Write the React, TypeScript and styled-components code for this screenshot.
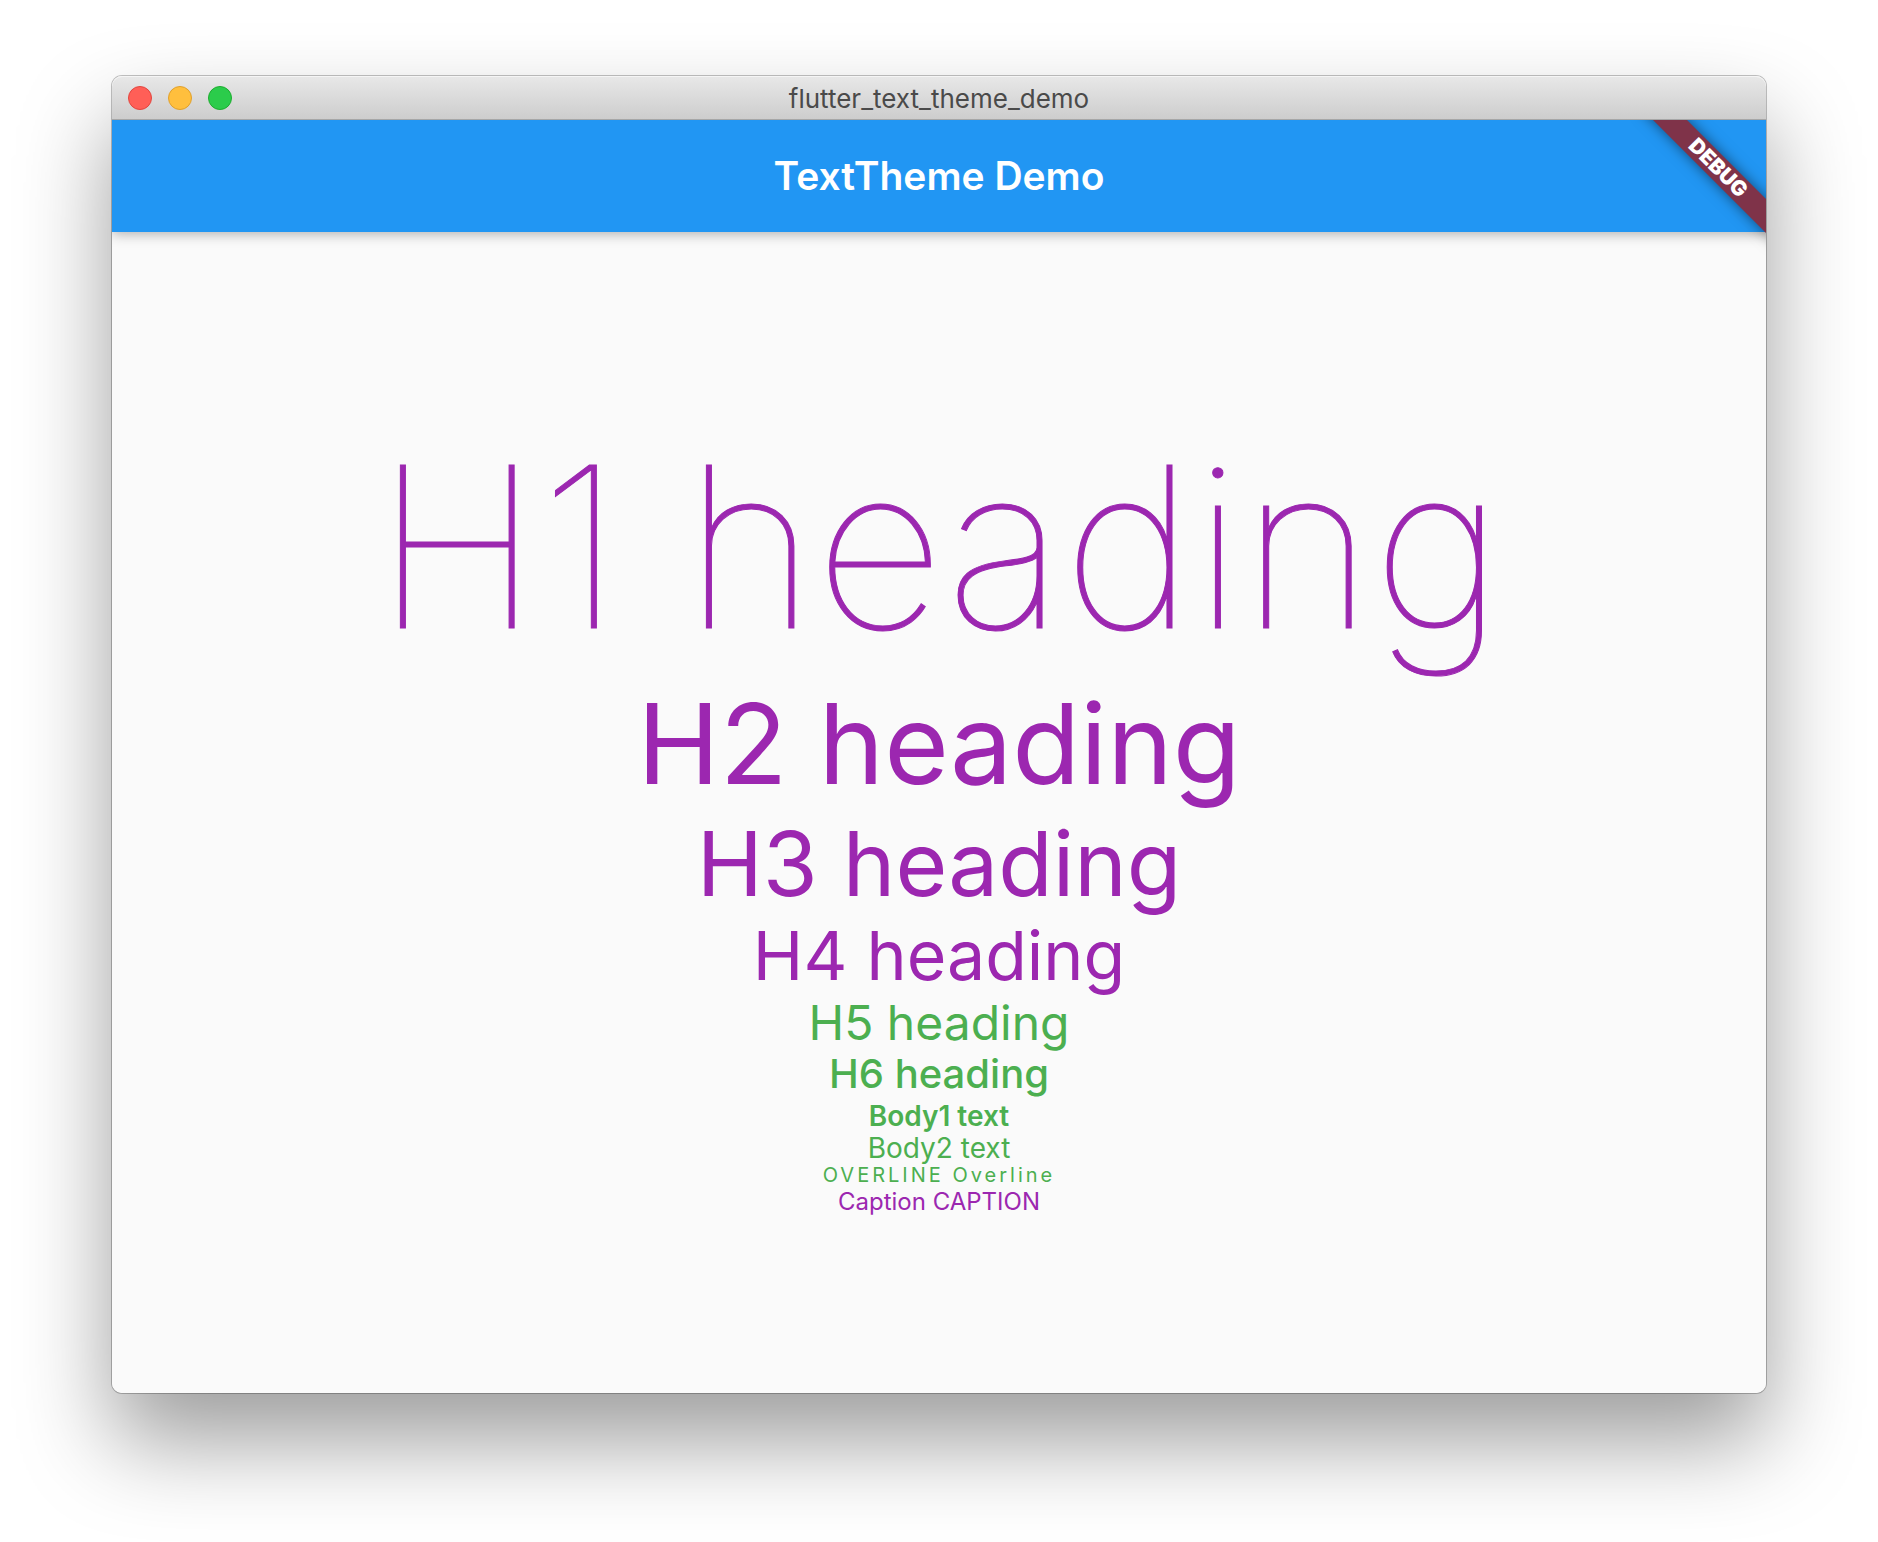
import React from "react";
import styled, { createGlobalStyle } from "styled-components";

const purple = "#9c27b0";
const green = "#4caf50";

const GlobalStyle = createGlobalStyle`
  * { box-sizing: border-box; }
  body {
    margin: 0;
    background: #ffffff;
    font-family: Inter, "Liberation Sans", sans-serif;
  }
`;

const Desktop = styled.div`
  display: flex;
  min-height: 100vh;
  padding: 76px 112px 149px;
  overflow: hidden;
`;

const Window = styled.section`
  flex: 1;
  display: flex;
  flex-direction: column;
  border-radius: 10px;
  box-shadow: 0 0 0 1px rgba(0, 0, 0, 0.24), 0 48px 92px rgba(0, 0, 0, 0.39);
`;

const TitleBar = styled.header`
  display: grid;
  grid-template-columns: 1fr auto 1fr;
  align-items: center;
  height: 44px;
  padding: 0 16px;
  border-radius: 10px 10px 0 0;
  border-bottom: 1px solid #a6a6a6;
  background: linear-gradient(#e8e8e8, #cdcdcd);
  box-shadow: inset 0 1px 0 #f5f5f5;
`;

const Lights = styled.div`
  display: flex;
  gap: 16px;
`;

const Light = styled.button<{ $fill: string; $edge: string }>`
  width: 24px;
  height: 24px;
  padding: 0;
  border: 1px solid ${(p) => p.$edge};
  border-radius: 50%;
  background: ${(p) => p.$fill};
`;

const WindowTitle = styled.span`
  padding-top: 2px;
  font-size: 26px;
  line-height: 32px;
  color: #4a4a4a;
`;

const Screen = styled.div`
  position: relative;
  flex: 1;
  display: flex;
  flex-direction: column;
  overflow: hidden;
  border-radius: 0 0 10px 10px;
  background: #fafafa;
`;

const AppBar = styled.div`
  display: flex;
  align-items: center;
  justify-content: center;
  height: 112px;
  background: #2196f3;
  box-shadow: 0 2px 12px rgba(0, 0, 0, 0.3);
`;

const AppTitle = styled.div`
  font-size: 39px;
  line-height: 48px;
  font-weight: 600;
  color: #ffffff;
`;

const DebugRibbon = styled.div`
  position: absolute;
  top: 36px;
  right: -47px;
  width: 190px;
  height: 24px;
  transform: rotate(45deg);
  background: #7f3349;
  box-shadow: 0 0 14px rgba(0, 0, 0, 0.5);
  color: #ffffff;
  font-size: 21px;
  line-height: 24px;
  font-weight: 900;
  text-align: center;
`;

const Samples = styled.main`
  flex: 1;
  display: flex;
  flex-direction: column;
  align-items: center;
  justify-content: center;
  padding-top: 13px;
`;

const Sample = styled.p<{
  $size: number;
  $line: number;
  $color: string;
  $weight?: number;
  $tracking?: number;
}>`
  margin: 0;
  white-space: nowrap;
  font-size: ${(p) => p.$size}px;
  line-height: ${(p) => p.$line}px;
  color: ${(p) => p.$color};
  font-weight: ${(p) => p.$weight ?? 400};
  letter-spacing: ${(p) => (p.$tracking ? `${p.$tracking}px` : "normal")};
`;

const Display = styled(Sample)`
  -webkit-text-stroke: 1px ${purple};
`;

export default function App() {
  return (
    <>
      <GlobalStyle />
      <Desktop>
        <Window>
          <TitleBar>
            <Lights>
              <Light type="button" aria-label="Close" $fill="#ff5f57" $edge="#e2463f" />
              <Light type="button" aria-label="Minimize" $fill="#ffbf3d" $edge="#e0a02c" />
              <Light type="button" aria-label="Zoom" $fill="#2bcc4b" $edge="#1dad2f" />
            </Lights>
            <WindowTitle>flutter_text_theme_demo</WindowTitle>
          </TitleBar>
          <Screen>
            <AppBar>
              <AppTitle>TextTheme Demo</AppTitle>
            </AppBar>
            <Samples>
              <Display as="h1" $size={224} $line={252} $color={purple} $weight={100}>H1 heading</Display>
              <Sample as="h2" $size={111} $line={142} $color={purple}>H2 heading</Sample>
              <Sample as="h3" $size={89} $line={98} $color={purple}>H3 heading</Sample>
              <Sample as="h4" $size={68} $line={85} $color={purple}>H4 heading</Sample>
              <Sample as="h5" $size={48} $line={49} $color={green}>H5 heading</Sample>
              <Sample as="h6" $size={40} $line={53} $color={green} $weight={500}>H6 heading</Sample>
              <Sample $size={28} $line={32} $color={green} $weight={600}>Body1 text</Sample>
              <Sample $size={28} $line={32} $color={green}>Body2 text</Sample>
              <Sample $size={20} $line={22} $color={green} $tracking={3}>OVERLINE Overline</Sample>
              <Sample $size={24} $line={32} $color={purple}>Caption CAPTION</Sample>
            </Samples>
            <DebugRibbon>DEBUG</DebugRibbon>
          </Screen>
        </Window>
      </Desktop>
    </>
  );
}
